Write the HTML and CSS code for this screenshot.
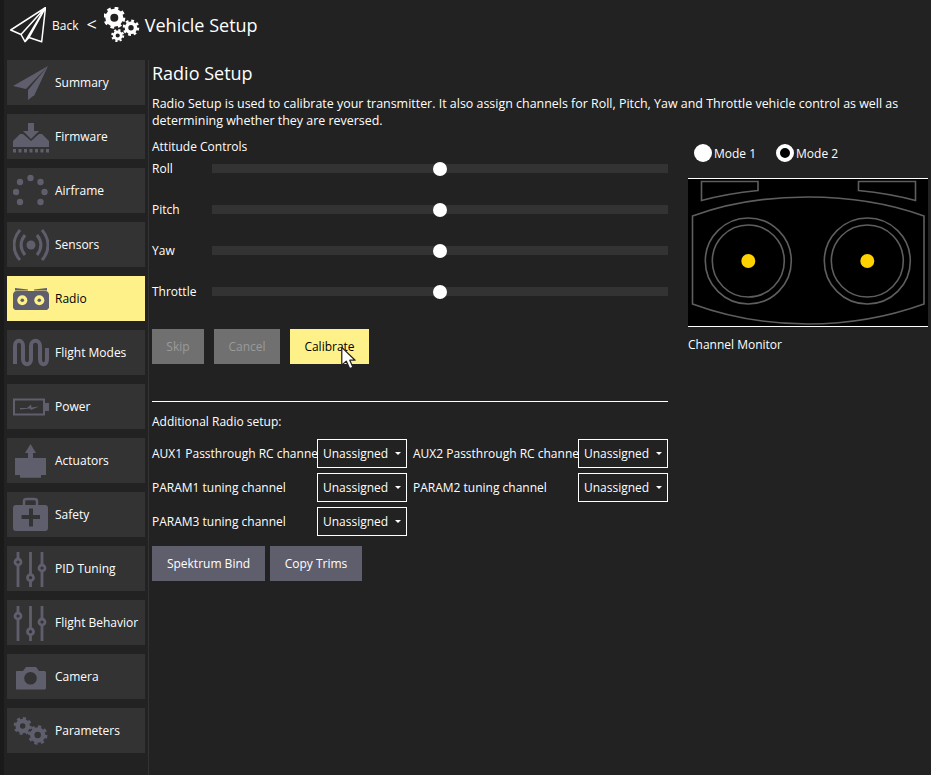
FILE: index.html
```html
<!DOCTYPE html>
<html lang="en">
<head>
    <meta charset="UTF-8">
    <title>Vehicle Setup</title>
    <link rel="stylesheet" href="styles.css">
</head>
<body>
    <div class="app">
        <header class="toolbar">
            <svg class="plane-icon" viewBox="0 0 36 36"><path d="M35.500 .5 .7 23 11 27.500 15 34.700 19 30.500 31.700 34.700ZM35.500 .5 11 27.500M35.500 .5 15 34.700M35.500 .5 19 30.500" fill="none" stroke="#fff" stroke-width="1.500" stroke-linejoin="round"/></svg>
            <span class="back">Back</span>
            <span class="chevron">&lt;</span>
            <svg class="gears-icon" viewBox="0 0 36 36">
                <g fill="none" stroke="#fff">
                    <circle cx="10.300" cy="10.700" r="6.500" stroke-width="5"/>
                    <circle cx="10.300" cy="10.700" r="9.500" stroke-width="3" stroke-dasharray="3.700 3.760"/>
                    <circle cx="27" cy="20.700" r="4.500" stroke-width="3.600"/>
                    <circle cx="27" cy="20.700" r="7" stroke-width="2.500" stroke-dasharray="2.750 2.750"/>
                    <circle cx="13.700" cy="28.500" r="3.500" stroke-width="2.800"/>
                    <circle cx="13.700" cy="28.500" r="5.500" stroke-width="2" stroke-dasharray="2.160 2.160"/>
                </g>
            </svg>
            <span class="toolbar-title">Vehicle Setup</span>
        </header>
        <div class="main">
            <nav class="sidebar">
                <a class="nav-btn">
                    <svg class="nav-icon" viewBox="0 0 36 36"><path d="M35 1 0 21 13 24ZM35 1 15 25V28L21 31ZM15 27V35L22 29.500Z"/></svg>
                    <span>Summary</span>
                </a>
                <a class="nav-btn">
                    <svg class="nav-icon" viewBox="0 0 36 36"><path d="M15 4h6v8h5L18 20 10 12h5Z"/><path d="M0 22 7 15h3L18 22 26 15h3L36 22V28H0Z"/><path d="M0 30h3v3.500H0ZM5.500 30h3v3.500h-3ZM11 30h3v3.500h-3ZM16.500 30h3v3.500h-3ZM22 30h3v3.500h-3ZM27.500 30h3v3.500h-3ZM33 30h3v3.500h-3Z"/></svg>
                    <span>Firmware</span>
                </a>
                <a class="nav-btn">
                    <svg class="nav-icon" viewBox="0 0 36 36"><circle cx="17.500" cy="5" r="3.200"/><circle cx="7" cy="9" r="3.200"/><circle cx="27.500" cy="9" r="3.200"/><circle cx="3" cy="19" r="3.200"/><circle cx="31.500" cy="19" r="3.200"/><circle cx="7" cy="29" r="3.200"/><circle cx="27.500" cy="29" r="3.200"/></svg>
                    <span>Airframe</span>
                </a>
                <a class="nav-btn">
                    <svg class="nav-icon" viewBox="0 0 36 36"><circle cx="18" cy="18" r="4.500"/><path d="M7 3C-1 12-1 24 7 33M29 3C37 12 37 24 29 33M12 8C6.500 15 6.500 21 12 28M24 8C29.500 15 29.500 21 24 28" fill="none" stroke="#5f5e6d" stroke-width="3"/></svg>
                    <span>Sensors</span>
                </a>
                <a class="nav-btn active">
                    <svg class="nav-icon" viewBox="0 0 36 36"><path d="M2 7 15 8.500V9.500H2ZM34 7 21 8.500V9.500H34Z"/><path d="M4 10H32C35 10 36 12 36 14V27L34 29H2L0 27V14C0 12 1 10 4 10Z"/><circle cx="9.300" cy="19.300" r="5" fill="#fff18a"/><circle cx="26.300" cy="19.300" r="5" fill="#fff18a"/><circle cx="9.300" cy="19.300" r="1.800"/><circle cx="26.300" cy="19.300" r="1.800"/></svg>
                    <span>Radio</span>
                </a>
                <a class="nav-btn">
                    <svg class="nav-icon" viewBox="0 0 36 36"><path d="M2 29V11C2 4 10 4 10 11V24C10 31 18 31 18 24V11C18 4 27 4 27 11V24C27 31 34 31 34 24V13" fill="none" stroke="#5f5e6d" stroke-width="4"/></svg>
                    <span>Flight Modes</span>
                </a>
                <a class="nav-btn">
                    <svg class="nav-icon" viewBox="0 0 36 36"><path d="M1 10.500H31V25.500H1Z" fill="none" stroke="#5f5e6d" stroke-width="2"/><path d="M32 14H36V22H32Z"/><path d="M7 19 14 19 18 15.500 18.500 18.500 26 17.500 18 21 17 19.500 7 20.500Z"/></svg>
                    <span>Power</span>
                </a>
                <a class="nav-btn">
                    <svg class="nav-icon" viewBox="0 0 36 36"><path d="M17.500 1 23 10H20V15H15V10H12Z"/><path d="M2 15H33V32H28V34.700H7V32H2Z"/></svg>
                    <span>Actuators</span>
                </a>
                <a class="nav-btn">
                    <svg class="nav-icon" viewBox="0 0 36 36"><path d="M11 9V4C11 2.500 12 2 14 2H21C23 2 24 2.500 24 4V9" fill="none" stroke="#5f5e6d" stroke-width="2.500"/><path fill-rule="evenodd" d="M3 8H32C34 8 35 9 35 11V31C35 33 34 34 32 34H3C1 34 0 33 0 31V11C0 9 1 8 3 8ZM16 11.500V18H8.500V22H16V29.500H20V22H27V18H20V11.500Z"/></svg>
                    <span>Safety</span>
                </a>
                <a class="nav-btn">
                    <svg class="nav-icon" viewBox="0 0 36 36"><path d="M5 1V36M17.500 1V36M29 1V36" stroke="#5f5e6d" stroke-width="2.800" fill="none"/><g fill="#333" stroke="#5f5e6d" stroke-width="2.800"><circle cx="5" cy="11" r="3"/><circle cx="17.500" cy="26.700" r="3"/><circle cx="29" cy="17" r="3"/></g></svg>
                    <span>PID Tuning</span>
                </a>
                <a class="nav-btn">
                    <svg class="nav-icon" viewBox="0 0 36 36"><path d="M5 1V36M17.500 1V36M29 1V36" stroke="#5f5e6d" stroke-width="2.800" fill="none"/><g fill="#333" stroke="#5f5e6d" stroke-width="2.800"><circle cx="5" cy="11" r="3"/><circle cx="17.500" cy="26.700" r="3"/><circle cx="29" cy="17" r="3"/></g></svg>
                    <span>Flight Behavior</span>
                </a>
                <a class="nav-btn">
                    <svg class="nav-icon" viewBox="0 0 36 36"><path fill-rule="evenodd" d="M4 12H10L13 8H23L26 12H31C32 12 33 12.500 33 14V29C33 30 32 30.500 31 30.500H4C3 30.500 3 30 3 29V14C3 12.500 3 12 4 12ZM17.500 13A6.300 6.300 0 1 0 17.510 25.600 6.300 6.300 0 1 0 17.500 13Z"/></svg>
                    <span>Camera</span>
                </a>
                <a class="nav-btn">
                    <svg class="nav-icon" viewBox="0 0 36 36">
                        <g fill="none" stroke="#5f5e6d">
                            <circle cx="9.700" cy="13" r="5" stroke-width="4.500"/>
                            <circle cx="9.700" cy="13" r="7.800" stroke-width="2.500" stroke-dasharray="3.060 3.070"/>
                            <circle cx="24.700" cy="22" r="5.500" stroke-width="4.500"/>
                            <circle cx="24.700" cy="22" r="8.500" stroke-width="2.500" stroke-dasharray="3.330 3.340"/>
                        </g>
                    </svg>
                    <span>Parameters</span>
                </a>
            </nav>
            <section class="content">
                <h1 class="page-title">Radio Setup</h1>
                <p class="help-text">Radio Setup is used to calibrate your transmitter. It also assign channels for Roll, Pitch, Yaw and Throttle vehicle control as well as determining whether they are reversed.</p>
                <div class="setup-columns">
                    <div class="left-col">
                        <div class="attitude-label">Attitude Controls</div>
                        <div class="attitude-row">
                            <span class="attitude-name">Roll</span>
                            <div class="track"><span class="thumb"></span></div>
                        </div>
                        <div class="attitude-row">
                            <span class="attitude-name">Pitch</span>
                            <div class="track"><span class="thumb"></span></div>
                        </div>
                        <div class="attitude-row">
                            <span class="attitude-name">Yaw</span>
                            <div class="track"><span class="thumb"></span></div>
                        </div>
                        <div class="attitude-row">
                            <span class="attitude-name">Throttle</span>
                            <div class="track"><span class="thumb"></span></div>
                        </div>
                        <div class="cal-buttons">
                            <button class="btn btn-disabled btn-skip">Skip</button>
                            <button class="btn btn-disabled btn-cancel">Cancel</button>
                            <button class="btn btn-primary btn-calibrate">Calibrate
                                <svg class="cursor" viewBox="0 0 18 26"><path d="M2 1V21L7 16.500 11 25 14.500 23.500 11 15.500H17Z" fill="#fff" stroke="#222" stroke-width="1.400" stroke-linejoin="round"/></svg>
                            </button>
                        </div>
                        <hr class="divider">
                        <div class="additional-label">Additional Radio setup:</div>
                        <div class="channel-grid">
                            <span class="channel-label">AUX1 Passthrough RC channe</span>
                            <div class="combo">Unassigned<i class="caret"></i></div>
                            <span class="channel-label">AUX2 Passthrough RC channe</span>
                            <div class="combo">Unassigned<i class="caret"></i></div>
                            <span class="channel-label">PARAM1 tuning channel</span>
                            <div class="combo">Unassigned<i class="caret"></i></div>
                            <span class="channel-label">PARAM2 tuning channel</span>
                            <div class="combo">Unassigned<i class="caret"></i></div>
                            <span class="channel-label">PARAM3 tuning channel</span>
                            <div class="combo">Unassigned<i class="caret"></i></div>
                        </div>
                        <div class="bottom-buttons">
                            <button class="btn btn-plain btn-bind">Spektrum Bind</button>
                            <button class="btn btn-plain btn-trims">Copy Trims</button>
                        </div>
                    </div>
                    <div class="right-col">
                        <div class="modes">
                            <label class="mode"><span class="radio"></span>Mode 1</label>
                            <label class="mode"><span class="radio checked"></span>Mode 2</label>
                        </div>
                        <div class="stick-panel">
                            <svg class="stick-svg" viewBox="0 0 240 147">
                                <g fill="none" stroke="#5e5e5e" stroke-width="1.600">
                                    <path d="M13.500 2.500H70V11.500C50 13.500 30 17 13.500 21.500Z"/>
                                    <path d="M227.500 2.500H170.500V11.500C191 13.500 211 17 227.500 21.500Z"/>
                                    <path d="M4.500 37C40 24 80 18 120 18 160 18 200 24 236 37V125C200 138 160 145 120 145 80 145 40 138 4.500 125Z"/>
                                    <circle cx="60.300" cy="82" r="43"/>
                                    <circle cx="60.300" cy="82" r="36"/>
                                    <circle cx="179.300" cy="82" r="43"/>
                                    <circle cx="179.300" cy="82" r="36"/>
                                </g>
                                <circle cx="60.300" cy="82" r="7" fill="#ffd200"/>
                                <circle cx="179.300" cy="82" r="7" fill="#ffd200"/>
                            </svg>
                        </div>
                        <div class="monitor-label">Channel Monitor</div>
                    </div>
                </div>
            </section>
        </div>
    </div>
</body>
</html>
```

FILE: styles.css
```css
* {
    box-sizing: border-box;
}
body {
    margin: 0;
    background-color: #222222;
    color: #ffffff;
    font-family: "Open Sans", sans-serif;
    font-size: 12px;
}
.app {
    height: 775px;
    width: 931px;
    overflow: hidden;
    border-left: 4px solid #1a1a1a;
}
.toolbar {
    height: 50px;
    margin-bottom: 10px;
    display: flex;
    align-items: center;
    padding-left: 6px;
}
.plane-icon {
    width: 36px;
    height: 36px;
}
.back {
    margin-left: 6px;
}
.chevron {
    margin-left: 8px;
    font-size: 18px;
    margin-top: -3px;
}
.gears-icon {
    width: 36px;
    height: 36px;
    margin-left: 7px;
}
.toolbar-title {
    margin-left: 5px;
    font-size: 18px;
}
.main {
    display: flex;
    height: 715px;
}
.sidebar {
    width: 145px;
    padding-left: 3px;
    border-right: 1px solid #333333;
    display: flex;
    flex-direction: column;
    gap: 9px;
}
.nav-btn {
    display: flex;
    align-items: center;
    gap: 6px;
    width: 138px;
    height: 45px;
    padding-left: 6px;
    background-color: #333333;
    flex-shrink: 0;
    white-space: nowrap;
}
.nav-icon {
    width: 36px;
    height: 36px;
    fill: #5f5e6d;
    flex-shrink: 0;
}
.nav-btn.active {
    background-color: #fff18a;
    color: #000000;
}
.content {
    flex: 1;
    padding: 0 3px;
}
.page-title {
    margin: 0;
    font-size: 18px;
    font-weight: 400;
    line-height: 26px;
}
.help-text {
    margin: 9px 0 0;
    width: 770px;
    font-size: 12.450px;
    line-height: 17px;
}
.setup-columns {
    display: flex;
}
.left-col {
    width: 516px;
}
.attitude-label {
    margin-top: 9px;
    margin-bottom: 5px;
    line-height: 17px;
}
.attitude-row {
    display: flex;
    align-items: center;
    height: 17px;
    margin-bottom: 24px;
}
.attitude-name {
    width: 60px;
}
.track {
    position: relative;
    width: 456px;
    height: 9px;
    background-color: #333333;
}
.thumb {
    position: absolute;
    left: 221px;
    top: -2.500px;
    width: 14px;
    height: 14px;
    border-radius: 50%;
    background-color: #ffffff;
}
.cal-buttons {
    display: flex;
    gap: 10px;
    margin-top: 29px;
}
.btn {
    height: 35px;
    border: none;
    padding: 0;
    font-family: "Open Sans", sans-serif;
    font-size: 12px;
}
.btn-disabled {
    background-color: #707070;
    color: #9a9a9a;
}
.btn-skip {
    width: 52px;
}
.btn-cancel {
    width: 66px;
}
.btn-primary {
    position: relative;
    background-color: #fff18a;
    color: #000000;
}
.btn-calibrate {
    width: 79px;
}
.cursor {
    position: absolute;
    left: 50px;
    top: 17px;
    width: 16px;
    height: 24px;
}
.divider {
    margin: 37px 0 0;
    border: none;
    border-top: 1px solid #ffffff;
}
.additional-label {
    margin-top: 11px;
    line-height: 17px;
}
.channel-grid {
    display: grid;
    grid-template-columns: 165px 96px 165px 90px;
    row-gap: 5px;
    margin-top: 9px;
}
.channel-label {
    line-height: 29px;
    white-space: nowrap;
}
.combo {
    display: flex;
    align-items: center;
    justify-content: space-between;
    width: 90px;
    height: 29px;
    padding: 0 5px;
    border: 1px solid #ffffff;
}
.caret {
    width: 0;
    height: 0;
    border-left: 3.500px solid transparent;
    border-right: 3.500px solid transparent;
    border-top: 3.500px solid #ffffff;
}
.bottom-buttons {
    display: flex;
    gap: 5px;
    margin-top: 10px;
}
.btn-plain {
    background-color: #5f5e6d;
    color: #ffffff;
}
.btn-bind {
    width: 113px;
}
.btn-trims {
    width: 92px;
}
.right-col {
    width: 240px;
    margin-left: 20px;
    margin-top: 7px;
}
.modes {
    display: flex;
    gap: 20px;
    padding-left: 6px;
    height: 34px;
    align-items: center;
}
.mode {
    display: flex;
    align-items: center;
    gap: 2px;
}
.radio {
    width: 18px;
    height: 18px;
    border-radius: 50%;
    background-color: #ffffff;
}
.radio.checked {
    border: 4.500px solid #ffffff;
    background-color: #000000;
}
.stick-panel {
    margin-top: 8px;
    height: 149px;
    background-color: #000000;
    border-top: 1px solid #ffffff;
    border-bottom: 1px solid #ffffff;
}
.stick-svg {
    display: block;
    width: 240px;
    height: 147px;
}
.monitor-label {
    margin-top: 9px;
    line-height: 17px;
}
```
